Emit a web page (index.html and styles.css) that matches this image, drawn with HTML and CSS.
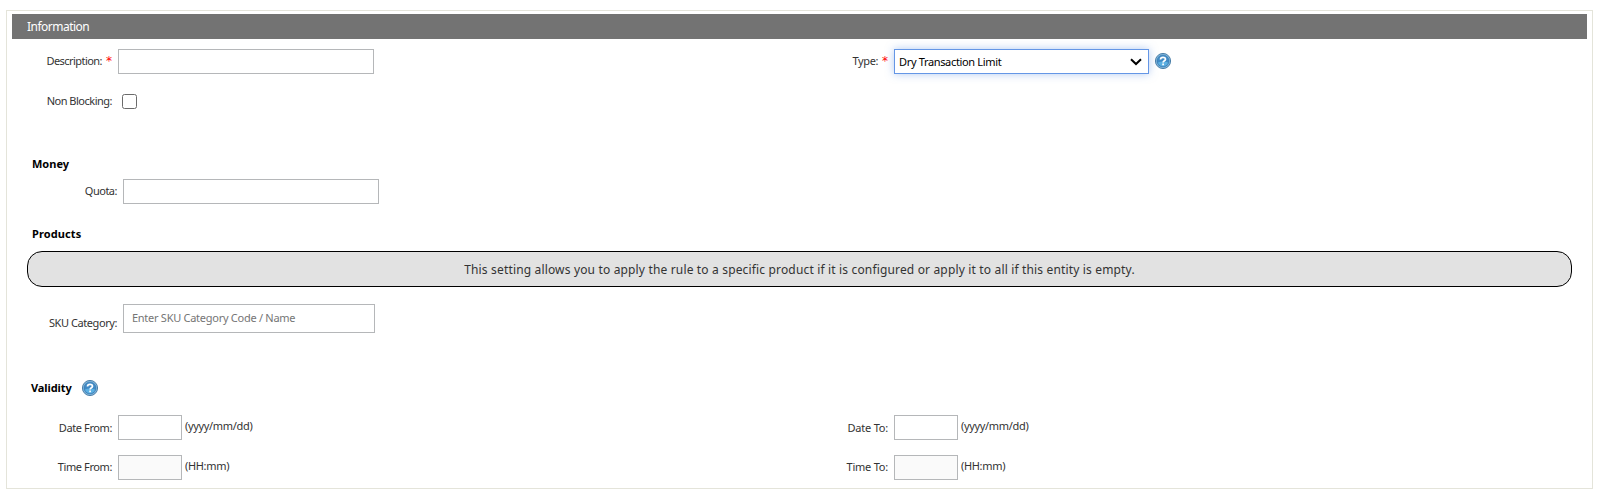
FILE: index.html
```html
<!DOCTYPE html>
<html lang="en">
<head>
<meta charset="utf-8">
<title>Information</title>
<link rel="stylesheet" href="styles.css">
</head>
<body>
<svg width="0" height="0" class="defs">
  <defs>
    <symbol id="help" viewBox="0 0 16 16">
      <circle cx="8" cy="8" r="7.6" fill="#8fc0e2" stroke="#2c6797" stroke-width=".8"/>
      <circle cx="8" cy="8" r="6.1" fill="#408ac5" stroke="#2f71a8" stroke-width=".5"/>
      <path d="M3 9.5Q8 7.5 13 9.5A5.2 5.2 0 0 1 3 9.5Z" fill="#5cb0e2"/>
      <path d="M5.5 6.5C5.5 3.6 10.5 3.6 10.5 6.2C10.5 7.8 8.1 7.7 8.1 9.6M8.1 10.6V12.3" fill="none" stroke="#fff" stroke-width="1.7"/>
    </symbol>
  </defs>
</svg>
<main class="panel">
  <h1 class="panel-title"><span class="t-info">Information</span></h1>
  <div class="row row-first">
    <div class="field"><label class="label"><span class="t-desc">Description:</span><b class="req">*</b></label><input class="input"></div>
    <div class="field"><label class="label"><span class="t-type">Type:</span><b class="req">*</b></label>
      <div class="select"><span class="t-dry">Dry Transaction Limit</span><svg width="12" height="8" viewBox="0 0 12 8"><path d="M1 1.2L6 6L11 1.2" fill="none" stroke="#000" stroke-width="2"/></svg></div>
      <svg class="help" width="16" height="16"><use href="#help"/></svg></div>
  </div>
  <div class="row row-check">
    <div class="field"><label class="label"><span class="t-non">Non Blocking:</span></label><span class="check"></span></div>
  </div>
  <h2 class="heading money"><span class="t-money">Money</span></h2>
  <div class="row indented row-quota">
    <div class="field"><label class="label"><span class="t-quota">Quota:</span></label><input class="input"></div>
  </div>
  <h2 class="heading products"><span class="t-products">Products</span></h2>
  <div class="notice"><span class="t-notice">This setting allows you to apply the rule to a specific product if it is configured or apply it to all if this entity is empty.</span></div>
  <div class="row indented row-sku">
    <div class="field"><label class="label sku-label"><span class="t-sku">SKU Category:</span></label><div class="lookup"><span class="t-enter">Enter SKU Category Code / Name</span></div></div>
  </div>
  <h2 class="heading validity"><span class="t-validity">Validity</span><svg width="16" height="16"><use href="#help"/></svg></h2>
  <div class="row row-date">
    <div class="field"><label class="label"><span class="t-from">Date From:</span></label><input class="input short"><span class="hint">(yyyy/mm/dd)</span></div>
    <div class="field"><label class="label"><span class="t-to">Date To:</span></label><input class="input short"><span class="hint">(yyyy/mm/dd)</span></div>
  </div>
  <div class="row row-time">
    <div class="field"><label class="label"><span class="t-from">Time From:</span></label><input class="input short" disabled><span class="hint">(HH:mm)</span></div>
    <div class="field"><label class="label"><span class="t-to">Time To:</span></label><input class="input short" disabled><span class="hint">(HH:mm)</span></div>
  </div>
</main>
</body>
</html>
```
FILE: styles.css
```css
* { box-sizing: border-box; }
body { margin: 0; padding: 10px 9px 9px 6px; background: #fff; color: #333; font: 11px/14px "Noto Sans", sans-serif; white-space: nowrap; overflow: hidden; }
.defs { display: none; }
.panel { height: 479px; border: 1px solid #e4e4da; padding: 3px 5px 0; }
.panel-title { margin: 0; height: 25px; padding-left: 15px; background: #737373; color: #fff; font-size: 12px; font-weight: 400; line-height: 25px; }
.row { display: grid; grid-template-columns: 776px 1fr; }
.field { display: flex; height: 25px; align-items: center; }
.label { display: flex; flex: none; width: 100px; margin-right: 6px; justify-content: flex-end; line-height: 25px; }
.row-first .label, .row-check .label, .row-quota .label, .row-time .label { padding-bottom: 2px; }
.req { width: 6px; margin-left: 4px; color: #f00; font: 12px/26px "DejaVu Sans", sans-serif; }
.input { width: 256px; height: 25px; margin: 0; padding: 0 5px; border: 1px solid #b5b7b9; border-radius: 0; background: #fff; }
.short { width: 64px; }
.short:disabled { background: #fafafa; }
.row-first { margin-top: 10px; }
.row-check { margin-top: 15px; }
.select { display: flex; width: 255px; height: 25px; padding: 1px 6px 0 4px; align-items: center; justify-content: space-between; border: 1px solid #6496e6; box-shadow: 0 0 8px rgba(100, 150, 230, .5); color: #000; }
.help { margin-left: 6px; margin-top: -1px; }
.check { width: 15px; height: 15px; margin: 0 0 0 4px; border: 1px solid #6b6b6b; border-radius: 2.5px; }
.heading { display: flex; align-items: center; margin: 0 0 0 20px; height: 16px; color: #000; font-size: 11px; font-weight: 700; }
.money { margin-top: 42px; }
.indented { padding-left: 5px; }
.row-quota { margin-top: 7px; }
.products { margin-top: 22px; }
.notice { display: flex; align-items: center; justify-content: center; height: 36px; margin: 9px 15px 0 15px; padding-top: 2px; border: 1px solid #000; border-radius: 15px; background: #e2e2e2; color: #333; font-size: 12px; }
.row-sku { margin-top: 17px; }
.row-sku .field { height: 29px; }
.sku-label { padding-top: 7px; }
.lookup { width: 252px; height: 29px; padding-left: 8px; border: 1px solid #b5b7b9; color: #757575; line-height: 26px; }
.validity { margin: 47px 0 0 19px; gap: 10px; }
.row-date { margin-top: 19px; }
.row-time { margin-top: 15px; }
.hint { margin-left: 3px; padding-bottom: 4px; letter-spacing: -.33px; }
.t-info { letter-spacing: -.52px; }
.t-desc { letter-spacing: -.55px; }
.t-type { letter-spacing: -.4px; }
.t-dry { letter-spacing: -.34px; }
.t-non, .t-quota { letter-spacing: -.5px; }
.t-from { letter-spacing: -.4px; }
.t-sku { letter-spacing: -.42px; }
.t-enter { letter-spacing: -.27px; }
.t-to { letter-spacing: -.22px; }
.t-products { letter-spacing: .1px; }
.t-validity { letter-spacing: -.1px; }
.t-notice { letter-spacing: .16px; }
```
